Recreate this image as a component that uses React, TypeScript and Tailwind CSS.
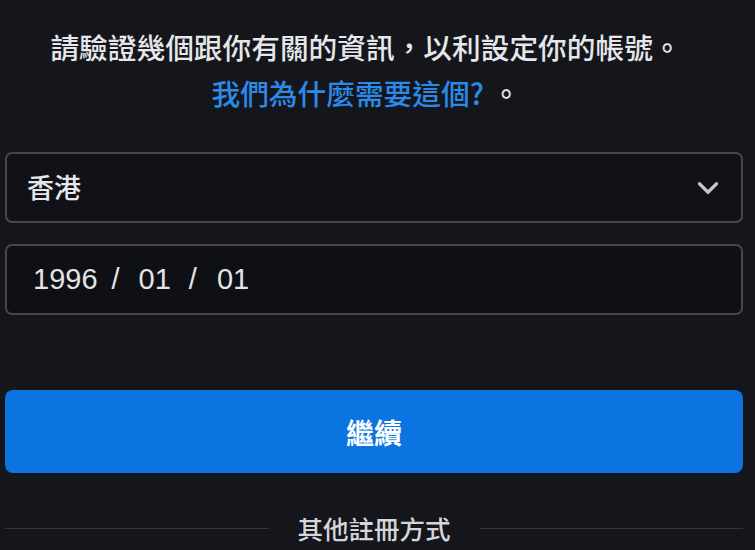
import { ChevronDown } from 'lucide-react';

const CJK = { fontFamily: '"Noto Sans CJK TC", "Noto Sans CJK SC", "Noto Sans", sans-serif' };

export default function App() {
  return (
    <div className="w-[755px] h-[550px] overflow-hidden bg-[#15161c]" style={CJK}>
      <div className="ml-[5px] w-[738px] flex flex-col">
        {/* Intro text */}
        <div className="pt-[24px] pr-[16px] text-center text-[28.7px] leading-[46px] font-medium text-[#e6e7ea]">
          <p className="whitespace-nowrap">請驗證幾個跟你有關的資訊，以利設定你的帳號。</p>
          <p className="whitespace-nowrap">
            <a className="text-[#2b8ae8]">我們為什麼需要這個?</a>
            <span className="ml-[8px]">。</span>
          </p>
        </div>

        {/* Country select */}
        <div className="mt-[36px] h-[71px] rounded-[7px] border-2 border-[#45474e] bg-[#111218] flex items-center justify-between pl-[20px] pr-[16px]">
          <span className="text-[27px] font-medium text-[#e6e7ea]">香港</span>
          <ChevronDown className="w-[34px] h-[34px] text-[#c4c5c9]" strokeWidth={2.3} />
        </div>

        {/* Birthday */}
        <div
          className="mt-[21px] h-[71px] rounded-[7px] border-2 border-[#45474e] bg-[#0f1015] flex items-center pl-[26px] text-[29px] text-[#e3e4e7]"
          style={{ fontFamily: '"Liberation Sans", Arial, sans-serif' }}
        >
          <span>1996</span>
          <span className="ml-[14px]">/</span>
          <span className="ml-[19px]">01</span>
          <span className="ml-[18px]">/</span>
          <span className="ml-[20px]">01</span>
        </div>

        {/* Continue button */}
        <button
          type="button"
          className="mt-[75px] h-[83px] rounded-[8px] bg-[#0b74e0] text-white text-[28px] font-bold"
        >
          繼續
        </button>

        {/* Divider */}
        <div className="mt-[42px] flex items-center">
          <div className="flex-1 h-px bg-[#34363d]" />
          <span className="px-[29px] text-[25.5px] font-medium text-[#d5d6da] leading-[26px]">其他註冊方式</span>
          <div className="flex-1 h-px bg-[#34363d]" />
        </div>
      </div>
    </div>
  );
}
